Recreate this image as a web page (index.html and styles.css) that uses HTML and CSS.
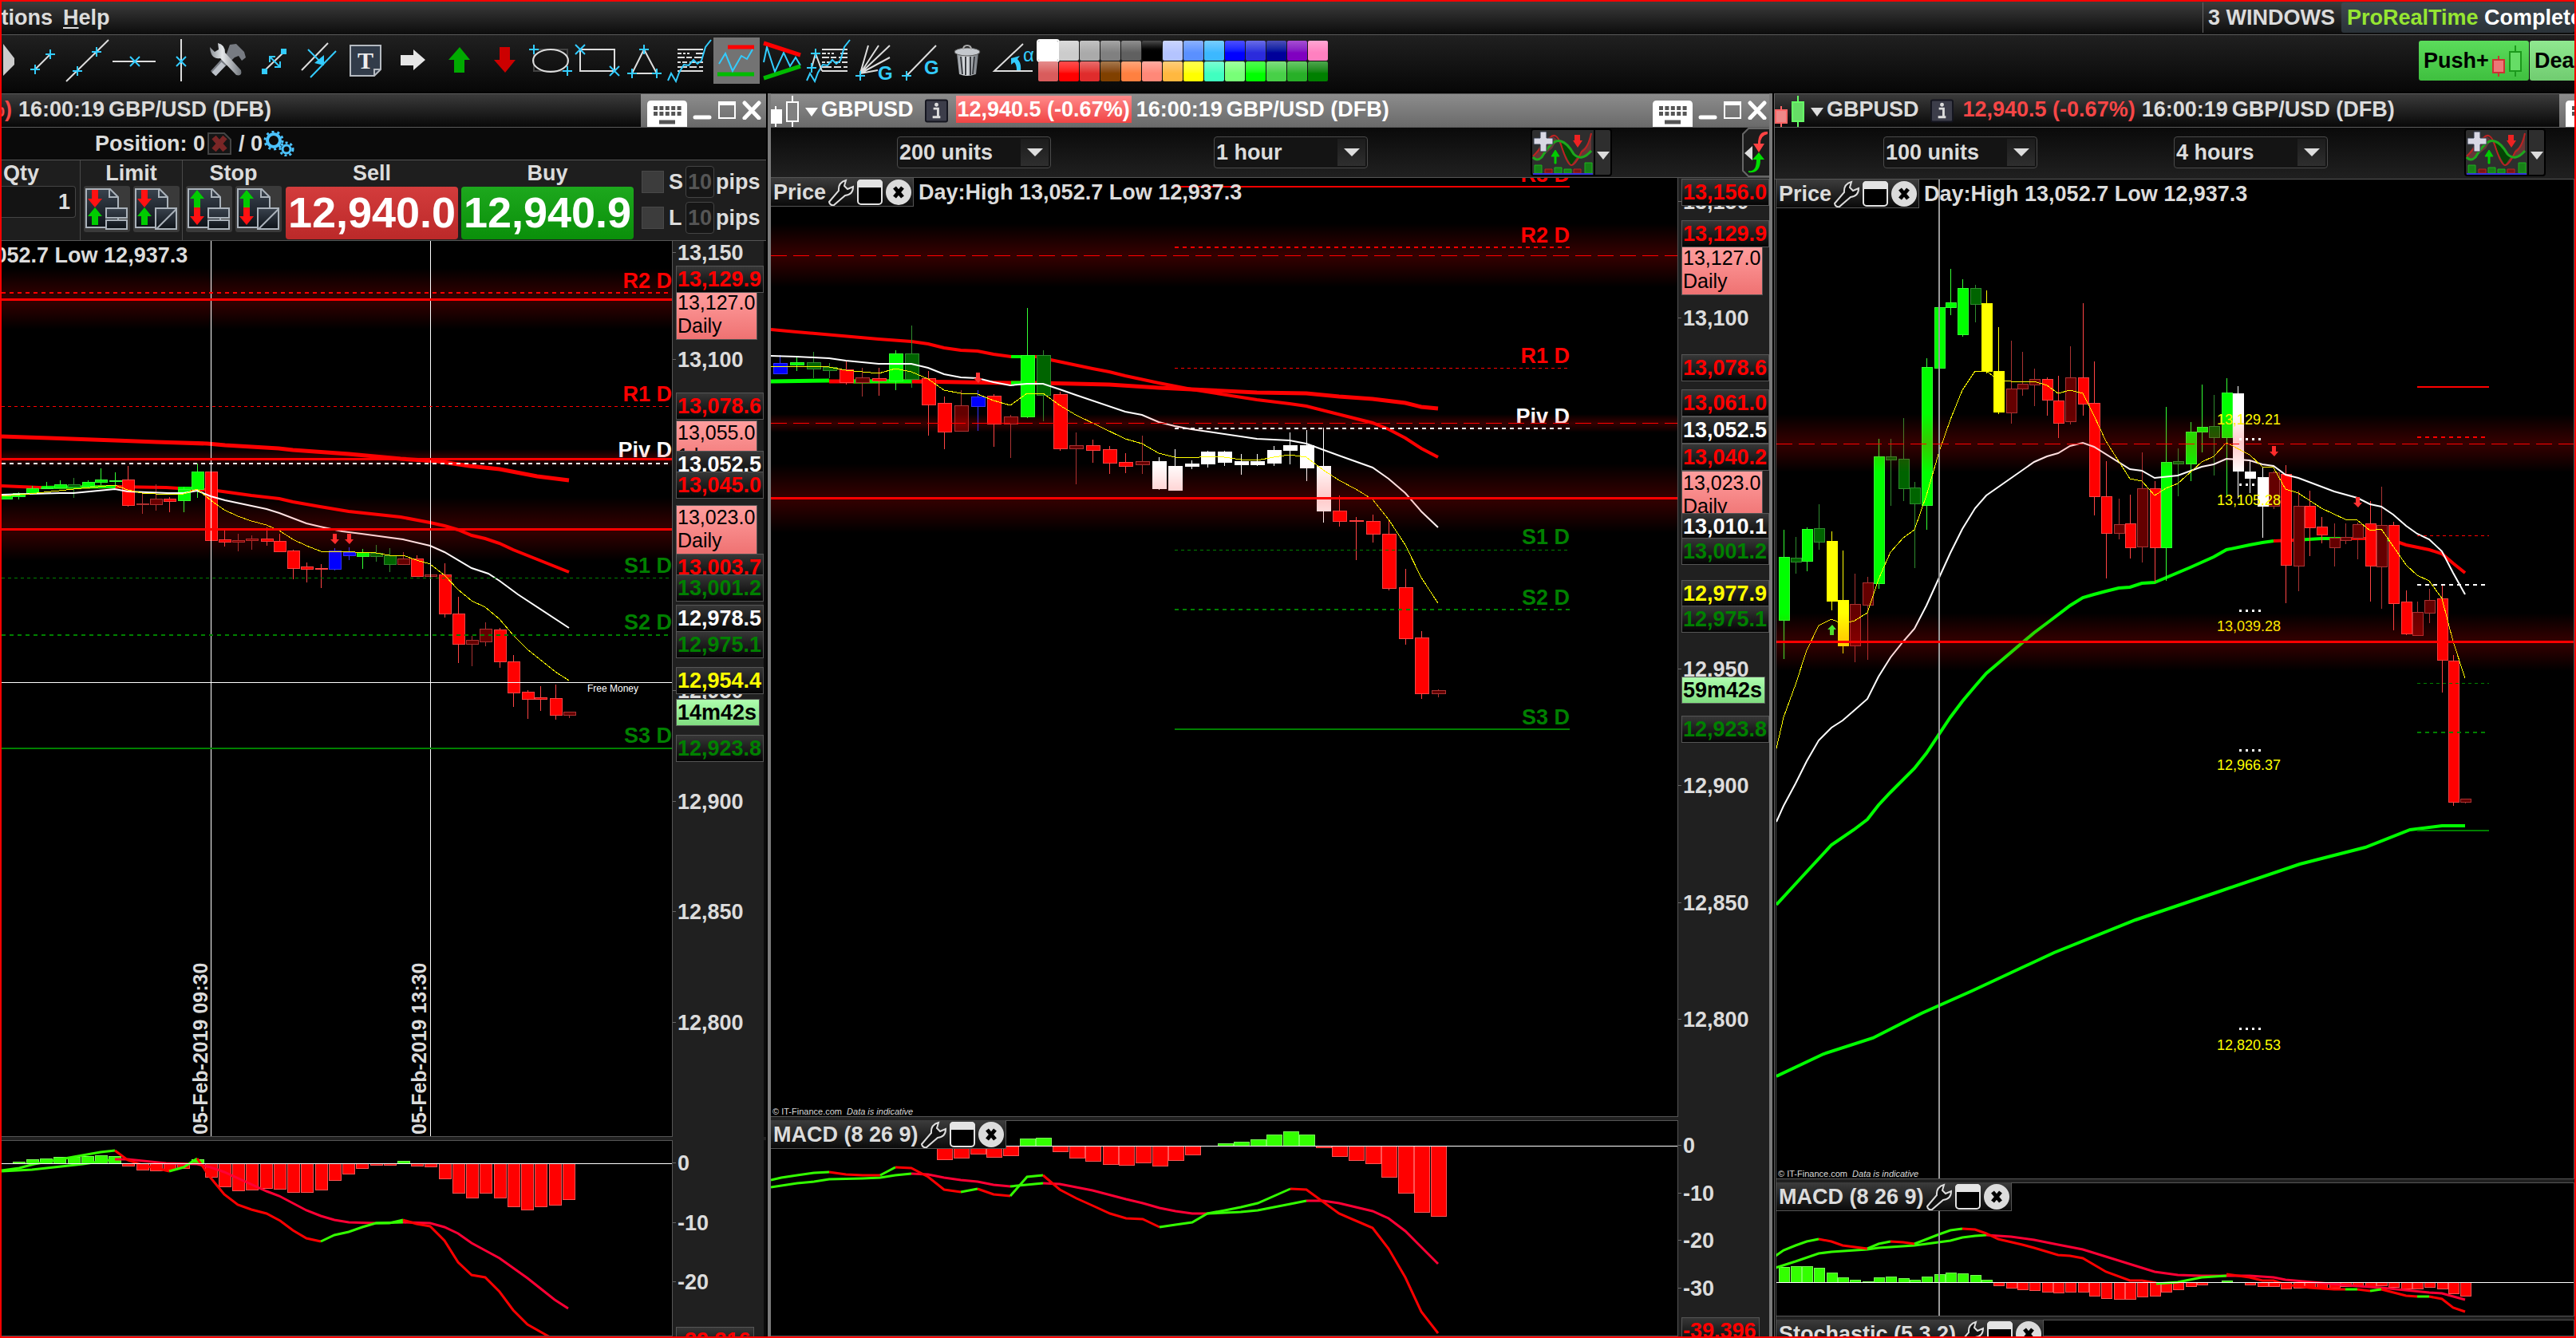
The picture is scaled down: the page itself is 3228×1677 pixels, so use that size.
FILE: index.html
```html
<!DOCTYPE html>
<html lang="en">
<head>
<meta charset="utf-8">
<title>ProRealTime Complete</title>
<link rel="stylesheet" href="styles.css">
</head>
<body>
<svg class="sprite" width="0" height="0" aria-hidden="true">
  <defs>
    <linearGradient id="band" x1="0" y1="0" x2="0" y2="1">
      <stop offset="0" stop-color="#f00" stop-opacity="0"/>
      <stop offset=".35" stop-color="#f00" stop-opacity=".15"/>
      <stop offset=".5" stop-color="#f00" stop-opacity=".21"/>
      <stop offset=".65" stop-color="#f00" stop-opacity=".15"/>
      <stop offset="1" stop-color="#f00" stop-opacity="0"/>
    </linearGradient>
    <linearGradient id="tag-dark" x1="0" y1="0" x2="0" y2="1"><stop offset="0" stop-color="#383838"/><stop offset="1" stop-color="#040404"/></linearGradient>
    <linearGradient id="tag-pink" x1="0" y1="0" x2="0" y2="1"><stop offset="0" stop-color="#ff9f9f"/><stop offset="1" stop-color="#ef7272"/></linearGradient>
    <linearGradient id="tag-green" x1="0" y1="0" x2="0" y2="1"><stop offset="0" stop-color="#b0ffb0"/><stop offset="1" stop-color="#80dc80"/></linearGradient>
    <linearGradient id="steel" x1="0" y1="0" x2="1" y2="0"><stop offset="0" stop-color="#8b9096"/><stop offset=".4" stop-color="#e4e7ea"/><stop offset="1" stop-color="#70757b"/></linearGradient>
    <linearGradient id="slate" x1="0" y1="0" x2="0" y2="1"><stop offset="0" stop-color="#39424d"/><stop offset="1" stop-color="#0d1218"/></linearGradient>
    <symbol id="i-keyboard" viewBox="0 0 50 33">
      <path d="M5 0h40q5 0 5 5v28H0V5q0-5 5-5z" fill="#fff"/>
      <path d="M8 9.500h35M8 16.500h35" stroke="#555" stroke-width="5" stroke-dasharray="5 2.400"/>
      <path d="M15 27h20" stroke="#555" stroke-width="5"/>
    </symbol>
    <symbol id="i-min" viewBox="0 0 24 24"><path d="M3 21h18" stroke="#fff" stroke-width="5" stroke-linecap="round"/></symbol>
    <symbol id="i-max" viewBox="0 0 24 24"><path d="M2 2h20v20H2z" fill="none" stroke="#fff" stroke-width="2"/><path d="M2 4h20" stroke="#fff" stroke-width="4"/></symbol>
    <symbol id="i-close" viewBox="0 0 24 24"><path d="M3 3l18 19M21 3L3 22" stroke="#fff" stroke-width="5" stroke-linecap="round"/></symbol>
    <symbol id="i-wrench" viewBox="0 0 34 34"><path d="M2 29L14 15Q13 5 23 2L21 9l4 4 7-3Q32 20 22 21L8 33Q3 34 2 29z" fill="#111" stroke="#ddd" stroke-width="2"/></symbol>
    <symbol id="i-panel" viewBox="0 0 34 34"><rect x="2" y="2" width="30" height="30" rx="4" fill="#000" stroke="#e4e4e4" stroke-width="2"/><path d="M1 11V6q0-5 5-5h22q5 0 5 5v5z" fill="#e4e4e4"/></symbol>
    <symbol id="i-round-x" viewBox="0 0 34 34"><circle cx="17" cy="17" r="16" fill="#dcdcdc"/><path d="M12 11l10 12M22 11L12 23" stroke="#000" stroke-width="5"/></symbol>
    <symbol id="i-info" viewBox="0 0 30 30"><rect x="1" y="1" width="28" height="28" rx="2" fill="#3c3d4a" stroke="#14151f" stroke-width="2"/><path d="M11 12h6v11M10 23h10" fill="none" stroke="#ddd" stroke-width="3"/><circle cx="15" cy="7" r="2.500" fill="#ddd"/></symbol>
    <symbol id="i-indicators" viewBox="0 0 102 60">
      <rect x="1" y="1" width="100" height="58" rx="3" fill="#2e2e2e" stroke="#000" stroke-width="2"/>
      <path d="M2 37L8 28Q26 -4 38 22Q46 46 51 46T64 27Q72 22 76 6V30L60 38Q50 36 42 22Q34 10 27 25L8 40z" fill="#7a3b3b" opacity=".75"/>
      <path d="M38 18Q46 18 58 36L51 46Q42 32 38 18z" fill="#054405"/>
      <path d="M3 35L24 12Q32 3 38 20Q46 46 51 46T64 29Q72 25 76 6" fill="none" stroke="#b22" stroke-width="2"/>
      <path d="M3 36Q8 42 14 36Q28 12 38 16Q46 18 54 32Q64 42 76 28" fill="none" stroke="#1da81d" stroke-width="3"/>
      <path d="M12 4h8v8h8v8h-8v9h-8v-9H4v-8h8z" fill="#d8d8e4" stroke="#303848" stroke-width="1"/>
      <path d="M30 44V35h-4l5-8 5 8h-4v9z" fill="#0c0" stroke="#0c0"/><path d="M55 8h7v7h3l-6 9-6-9h2z" fill="#e22"/>
      <path d="M5 46h9v10H5zM30 49h9v7h-9zM42 51h9v5h-9zM68 43h9v13h-9z" fill="#178017" stroke="#1db31d" stroke-width="1"/>
      <path d="M18 51h9v5h-9zM54 51h9v5h-9z" fill="#7a1515" stroke="#b22"/>
      <path d="M3 57h75" stroke="#33d" stroke-width="2"/><path d="M80 1v58" stroke="#000" stroke-width="2"/>
      <path d="M83 29h16l-8 10z" fill="#ddd"/>
    </symbol>
    <symbol id="i-candles" viewBox="0 0 38 40"><path d="M8 14v26M29 1v39" stroke="var(--wick1)" stroke-width="2"/><path d="M29 1v39" stroke="var(--wick2)" stroke-width="2"/><rect x="1" y="19" width="14" height="16" fill="var(--body1)" stroke="var(--wick1)" stroke-width="2"/><rect x="22" y="9" width="14" height="24" fill="var(--body2)" stroke="var(--wick2)" stroke-width="2"/></symbol>
    <symbol id="i-order-base" viewBox="0 0 58 58">
      <path d="M3 4h30l10 10v38H3z" fill="url(#slate)" stroke="#aab2ba" stroke-width="2"/><path d="M32 4v10h11" fill="none" stroke="#aab2ba" stroke-width="2"/>
    </symbol>
    <symbol id="i-two-box" viewBox="0 0 30 30"><path d="M2 2h26v12H2zM2 17h26v11H2z" fill="url(#slate)" stroke="#aab2ba" stroke-width="2"/></symbol>
    <symbol id="i-slash-box" viewBox="0 0 30 30"><path d="M2 2h26v26H2zM3 28L28 3" fill="url(#slate)" stroke="#aab2ba" stroke-width="2"/></symbol>
    <symbol id="i-up" viewBox="0 0 20 24"><path d="M6 23V12H1l9-11 9 11h-5v11z" fill="#0c0"/></symbol>
    <symbol id="i-down" viewBox="0 0 20 24"><path d="M6 1v11H1l9 11 9-11h-5V1z" fill="#f11"/></symbol>
  </defs>
</svg>

<nav class="menubar">
  <button class="menu menu-cut">Options</button>
  <button class="menu"><u>H</u>elp</button>
  <span class="win-count">3 WINDOWS</span>
  <span class="brand"><b>ProRealTime</b> Complete</span>
</nav>

<div class="toolbar">
  <div class="tools" id="tools"></div>
  <div class="palette" id="palette"></div>
  <div class="deal-actions">
    <button class="push">Push+<svg class="push-icon" width="38" height="40"><use href="#i-candles"/></svg></button>
    <button class="dealing">Dealing</button>
  </div>
</div>

<main class="windows">
  <section class="window win-left">
    <header class="titlebar">
      <span class="chg chg-cut">%)</span><span class="time">16:00:19</span><span>GBP/USD (DFB)</span>
      <div class="controls">
        <button aria-label="Keyboard"><svg width="50" height="33"><use href="#i-keyboard"/></svg></button>
        <button aria-label="Minimise"><svg width="24" height="24"><use href="#i-min"/></svg></button>
        <button aria-label="Maximise"><svg width="24" height="24"><use href="#i-max"/></svg></button>
        <button aria-label="Close"><svg width="24" height="24"><use href="#i-close"/></svg></button>
      </div>
    </header>
    <div class="position">
      <span>Position: 0</span>
      <svg width="32" height="30" viewBox="0 0 32 30"><path d="M2 2h20l8 8v18H2z" fill="#151515" stroke="#444" stroke-width="2"/><path d="M9 7l14 16M23 7L9 23" stroke="#7a2626" stroke-width="7"/></svg>
      <span class="pos-total">/ 0</span>
      <svg width="40" height="32" viewBox="0 0 40 32"><circle cx="14" cy="12" r="8" fill="none" stroke="#4cc3ff" stroke-width="4"/><circle cx="14" cy="12" r="11" fill="none" stroke="#4cc3ff" stroke-width="3" stroke-dasharray="3 4"/><circle cx="30" cy="23" r="5" fill="none" stroke="#4cc3ff" stroke-width="3"/><circle cx="30" cy="23" r="8" fill="none" stroke="#4cc3ff" stroke-width="3" stroke-dasharray="3 3"/></svg>
    </div>
    <div class="order">
      <div class="cell qty"><label for="qty">Qty</label><input id="qty" value="1"></div>
      <div class="cell pair"><span>Limit</span>
        <div class="pair-btns">
          <button aria-label="Limit price"><svg width="58" height="58"><use href="#i-order-base"/><use href="#i-down" x="4" y="4" width="20" height="24"/><use href="#i-up" x="4" y="26" width="20" height="24"/><use href="#i-two-box" x="26" y="26" width="30" height="30"/></svg></button>
          <button aria-label="Limit distance"><svg width="58" height="58"><use href="#i-order-base"/><use href="#i-down" x="4" y="4" width="20" height="24"/><use href="#i-up" x="4" y="26" width="20" height="24"/><use href="#i-slash-box" x="26" y="26" width="30" height="30"/></svg></button>
        </div></div>
      <div class="cell pair"><span>Stop</span>
        <div class="pair-btns">
          <button aria-label="Stop price"><svg width="58" height="58"><use href="#i-order-base"/><use href="#i-up" x="4" y="4" width="20" height="24"/><use href="#i-down" x="4" y="26" width="20" height="24"/><use href="#i-two-box" x="26" y="26" width="30" height="30"/></svg></button>
          <button aria-label="Stop distance"><svg width="58" height="58"><use href="#i-order-base"/><use href="#i-up" x="4" y="4" width="20" height="24"/><use href="#i-down" x="4" y="26" width="20" height="24"/><use href="#i-slash-box" x="26" y="26" width="30" height="30"/></svg></button>
        </div></div>
      <div class="cell price"><span>Sell</span><button class="sell">12,940.0</button></div>
      <div class="cell price"><span>Buy</span><button class="buy">12,940.9</button></div>
      <div class="cell protect">
        <div class="protect-row"><input type="checkbox" id="stop-on"><label for="stop-on">S</label><input class="pips" aria-label="Stop pips" value="10" disabled><span>pips</span></div>
        <div class="protect-row"><input type="checkbox" id="limit-on"><label for="limit-on">L</label><input class="pips" aria-label="Limit pips" value="10" disabled><span>pips</span></div>
      </div>
    </div>
    <div class="panes">
      <div class="pane left-price"><svg class="plot" data-chart="leftPrice"></svg><svg class="axis" data-axis="leftPrice"></svg>
        <div class="pane-head"><span class="day-range">Day:High 13,052.7 Low 12,937.3</span></div></div>
      <div class="pane left-macd"><svg class="plot" data-chart="leftMacd"></svg><svg class="axis" data-axis="leftMacd"></svg></div>
    </div>
  </section>

  <section class="window win-mid active">
    <header class="titlebar">
      <svg class="candle-icon" width="38" height="40"><use href="#i-candles"/></svg><i class="caret"></i>
      <span class="symbol">GBPUSD</span><svg class="info" width="29" height="30"><use href="#i-info"/></svg>
      <span class="chg">12,940.5 (-0.67%)</span><span class="time">16:00:19</span><span>GBP/USD (DFB)</span>
      <div class="controls">
        <button aria-label="Keyboard"><svg width="50" height="33"><use href="#i-keyboard"/></svg></button>
        <button aria-label="Minimise"><svg width="24" height="24"><use href="#i-min"/></svg></button>
        <button aria-label="Maximise"><svg width="24" height="24"><use href="#i-max"/></svg></button>
        <button aria-label="Close"><svg width="24" height="24"><use href="#i-close"/></svg></button>
      </div>
    </header>
    <div class="subbar">
      <div class="drop"><select aria-label="Units"><option>200 units</option></select></div>
      <div class="drop"><select aria-label="Timeframe"><option>1 hour</option></select></div>
      <button class="ind" aria-label="Add indicator"><svg width="102" height="60"><use href="#i-indicators"/></svg></button>
      <button class="tab" aria-label="Show orders"><svg width="34" height="62" viewBox="0 0 34 62"><path d="M34 1H8L1 8v46l7 7h26" fill="#1c1c1c" stroke="#666" stroke-width="2"/><path d="M32 5Q20 4 20 20h-6l7 11 7-11h-5Q23 10 32 8z" fill="#f44"/><path d="M8 54Q18 56 18 40h-5l8-9 7 9h-5Q23 58 8 56z" fill="#0d0"/><path d="M3 32l10-9v18z" fill="#ddd"/></svg></button>
    </div>
    <div class="panes">
      <div class="pane mid-price"><svg class="plot" data-chart="midPrice"></svg><svg class="axis" data-axis="midPrice"></svg>
        <div class="pane-head"><div class="pane-title"><span>Price</span><button aria-label="Settings"><svg width="34" height="34"><use href="#i-wrench"/></svg></button><button aria-label="Window"><svg width="34" height="34"><use href="#i-panel"/></svg></button><button aria-label="Remove"><svg width="34" height="34"><use href="#i-round-x"/></svg></button></div><span class="day-range">Day:High 13,052.7 Low 12,937.3</span></div>
        <p class="credit">© IT-Finance.com&nbsp; <i>Data is indicative</i></p></div>
      <div class="pane mid-macd"><svg class="plot" data-chart="midMacd"></svg><svg class="axis" data-axis="midMacd"></svg>
        <div class="pane-head"><div class="pane-title"><span>MACD (8 26 9)</span><button aria-label="Settings"><svg width="34" height="34"><use href="#i-wrench"/></svg></button><button aria-label="Window"><svg width="34" height="34"><use href="#i-panel"/></svg></button><button aria-label="Remove"><svg width="34" height="34"><use href="#i-round-x"/></svg></button></div></div></div>
    </div>
  </section>

  <section class="window win-right">
    <header class="titlebar">
      <svg class="candle-icon" width="38" height="40"><use href="#i-candles"/></svg><i class="caret"></i>
      <span class="symbol">GBPUSD</span><svg class="info" width="29" height="30"><use href="#i-info"/></svg>
      <span class="chg">12,940.5 (-0.67%)</span><span class="time">16:00:19</span><span>GBP/USD (DFB)</span>
      <div class="controls controls-cut">
        <button aria-label="Keyboard"><svg width="50" height="33"><use href="#i-keyboard"/></svg></button>
      </div>
    </header>
    <div class="subbar">
      <div class="drop"><select aria-label="Units"><option>100 units</option></select></div>
      <div class="drop"><select aria-label="Timeframe"><option>4 hours</option></select></div>
      <button class="ind" aria-label="Add indicator"><svg width="102" height="60"><use href="#i-indicators"/></svg></button>
    </div>
    <div class="panes">
      <div class="pane right-price"><svg class="plot" data-chart="rightPrice"></svg>
        <div class="pane-head"><div class="pane-title"><span>Price</span><button aria-label="Settings"><svg width="34" height="34"><use href="#i-wrench"/></svg></button><button aria-label="Window"><svg width="34" height="34"><use href="#i-panel"/></svg></button><button aria-label="Remove"><svg width="34" height="34"><use href="#i-round-x"/></svg></button></div><span class="day-range">Day:High 13,052.7 Low 12,937.3</span></div>
        <p class="credit">© IT-Finance.com&nbsp; <i>Data is indicative</i></p></div>
      <div class="pane right-macd"><svg class="plot" data-chart="rightMacd"></svg>
        <div class="pane-head"><div class="pane-title"><span>MACD (8 26 9)</span><button aria-label="Settings"><svg width="34" height="34"><use href="#i-wrench"/></svg></button><button aria-label="Window"><svg width="34" height="34"><use href="#i-panel"/></svg></button><button aria-label="Remove"><svg width="34" height="34"><use href="#i-round-x"/></svg></button></div></div></div>
      <div class="pane right-stoch"><svg class="plot"></svg>
        <div class="pane-head"><div class="pane-title"><span>Stochastic (5 3 2)</span><button aria-label="Settings"><svg width="34" height="34"><use href="#i-wrench"/></svg></button><button aria-label="Window"><svg width="34" height="34"><use href="#i-panel"/></svg></button><button aria-label="Remove"><svg width="34" height="34"><use href="#i-round-x"/></svg></button></div></div></div>
    </div>
  </section>
</main>
<script src="charts.js"></script>
</body>
</html>
```
FILE: styles.css
```css
* { box-sizing: border-box; }

body {
  margin: 0;
  height: 100vh;
  display: flex;
  flex-direction: column;
  overflow: hidden;
  border: 2px solid #f00;
  background: #000;
  color: #dcdcdc;
  font: bold 27px/32px "Liberation Sans", Arial, sans-serif;
  white-space: nowrap;
}

button, input, select { font: inherit; color: inherit; margin: 0; padding: 0; border: 0; background: none; }
svg { display: block; flex: none; }
.sprite { position: absolute; }

/* menu bar */
.menubar {
  display: flex;
  align-items: center;
  height: 42px;
  flex: none;
  padding-bottom: 2px;
  overflow: hidden;
  background: linear-gradient(#3c3c3c, #0c0c0c);
  border-bottom: 1px solid #5a5a5a;
}
.menu { margin-right: 13px; }
.menu-cut { margin-left: -38px; }
.menu u { text-decoration-thickness: 2px; text-underline-offset: 3px; }
.win-count { margin-left: auto; padding: 3px 8px 3px 6px; border-left: 1px solid #666; }
.brand {
  flex: none;
  width: 292px;
  height: 38px;
  padding: 3px 7px;
  overflow: hidden;
  color: #fff;
  background: linear-gradient(#3f484f, #2a3238);
  border-radius: 3px;
}
.brand b { color: #96e632; }

/* drawing toolbar */
.toolbar {
  display: flex;
  align-items: flex-start;
  height: 73px;
  flex: none;
  overflow: hidden;
  background: linear-gradient(#202020, #070707);
  border-bottom: 2px solid #000;
}
.tools { display: flex; margin: 3px 0 0 -36px; }
.tools button { width: 58px; height: 58px; }
.tools button.on { background: #737373; }
.palette {
  display: grid;
  grid-template-columns: repeat(14, 25px);
  grid-auto-rows: 25px;
  gap: 1px;
  margin: 7px 0 0 1px;
}
.palette button { border-radius: 2px; }
.palette button.on { outline: 2px solid #fff; }
.deal-actions { display: flex; gap: 1px; margin: 7px 0 0 auto; color: #000; }
.push {
  display: flex;
  align-items: center;
  width: 138px;
  height: 50px;
  padding: 0 6px;
  border-radius: 3px;
  background: linear-gradient(#5bdc5b, #3fbf3f);
}
.push-icon { --wick1: #c33; --body1: #e77; --wick2: #1c991c; --body2: #6d6; margin-left: 4px; }
.dealing { width: 56px; height: 50px; padding-left: 6px; overflow: hidden; text-align: left; background: linear-gradient(#90e890, #70cc70); border-radius: 3px 0 0 3px; }

/* windows */
.windows { display: grid; grid-template-columns: 959fr 1261fr 1004fr; flex: 1; min-height: 0; }
.window { display: flex; flex-direction: column; min-width: 0; min-height: 0; overflow: hidden; }
.win-mid { margin: 0 1px; border: solid #7a7a7a; border-width: 0 4px; }
.win-right { margin-left: 1px; border-left: 1px solid #666; }

.titlebar {
  display: flex;
  align-items: center;
  height: 43px;
  flex: none;
  overflow: hidden;
  background: linear-gradient(#3b3b3b, #080808);
  border: solid #5a5a5a;
  border-width: 1px 0;
}
.titlebar > span { margin-bottom: 3px; }
.active .titlebar { color: #fff; background: linear-gradient(#8c8c8c, #6a6a6a); margin: 0 -4px; padding-left: 2px; }
.caret { margin: 3px 4px 0 7px; border: 8px solid transparent; border-top: 11px solid #ddd; border-bottom: 0; }
.active .caret { border-top-color: #fff; }
.info { margin: 0 10px 0 14px; }
.symbol { flex: none; }
.chg { color: #f64646; padding: 0 2px; }
.active .chg { color: #fff; background: linear-gradient(#ff8a8a, #f04444); padding: 1px 2px; }
.chg-cut { margin-left: -22px; }
.time { margin: 0 5px 0 6px; }
.candle-icon { --wick1: #f66; --body1: #e88; --wick2: #6f6; --body2: #6d6; }
.active .candle-icon { --wick1: #fff; --body1: #fff; --wick2: #fff; --body2: #808080; }
.controls { display: flex; gap: 7px; align-items: center; height: 41px; margin-left: auto; padding: 0 6px 2px 8px; background: linear-gradient(#8c8c8c, #6a6a6a); }
.win-mid .controls { padding-right: 7px; background: none; }
.controls button:first-child { align-self: flex-end; margin-bottom: -2px; }
.controls-cut { width: 19px; flex: none; overflow: hidden; padding-right: 0; }
.win-left { border-right: 1px solid #000; }

/* order ticket */
.position { display: flex; align-items: center; gap: 2px; height: 41px; flex: none; padding-left: 117px; background: #0a0a0a; border-bottom: 1px solid #555; }
.pos-total { margin: 0 -2px 0 6px; }
.order { display: flex; height: 101px; flex: none; padding: 0 3px 0 0; background: #1e1e1e; border-bottom: 1px solid #555; }
.cell { display: flex; flex-direction: column; align-items: center; }
.qty { align-items: flex-start; width: 98px; }
.qty label { padding-left: 2px; }
.qty input { width: 93px; height: 40px; padding-right: 6px; text-align: right; background: #141414; border: 1px solid #444; border-left: 0; border-radius: 0 4px 4px 0; }
.pair { width: 128px; border-left: 1px solid #484848; }
.pair-btns { display: flex; gap: 4px; }
.pair-btns button { background: #3a3a3a; border-radius: 3px; }
.price { width: 220px; }
.price button { width: 216px; height: 66px; margin-top: 1px; padding-bottom: 2px; color: #fff; font-size: 54px; line-height: 64px; border-radius: 4px; }
.sell { background: linear-gradient(#d33c3c, #bb2929); }
.buy { background: linear-gradient(#1da81d, #0a8f0a); }
.protect { gap: 5px; flex: 1; padding: 7px 0 0 8px; align-items: flex-start; }
.protect-row { display: flex; align-items: center; height: 40px; }
.protect-row input[type="checkbox"] { appearance: none; width: 28px; height: 28px; background: #3c3c3c; border: 1px solid #484848; }
.protect-row label { width: 20px; margin: 0 1px 0 6px; }
.pips { width: 36px; height: 40px; text-align: center; color: #555; background: #161616; border: 1px solid #444; border-radius: 4px; }
.protect-row span { margin-left: 2px; }

/* unit and timeframe bar */
.subbar { display: flex; align-items: center; height: 63px; flex: none; padding-left: 158px; background: linear-gradient(#0a0a0a, #202020); border-bottom: 1px solid #555; }
.win-right .subbar { height: 65px; padding: 0 0 2px 136px; }
.drop { position: relative; width: 193px; height: 40px; margin-right: 204px; background: #141414; border: 1px solid #4a4a4a; border-radius: 4px; }
.win-right .drop { margin-right: 171px; }
.drop select { appearance: none; width: 100%; height: 100%; padding-left: 2px; }
.drop::after { content: ""; position: absolute; right: 9px; top: 14px; border: 10px solid transparent; border-top: 10px solid #ddd; border-bottom: 0; }
.drop::before { content: ""; position: absolute; right: 2px; top: 2px; width: 35px; height: 34px; background: linear-gradient(#1c1c1c, #2e2e2e); pointer-events: none; }
.tab { margin-left: auto; }

/* chart panes */
.panes { display: flex; flex-direction: column; gap: 4px; flex: 1; min-height: 0; background: #202020; }
.pane { position: relative; display: flex; flex-basis: 0; min-height: 0; overflow: hidden; }
.plot { flex: 1; min-width: 0; height: 100%; background: #000; border: solid #555; border-width: 0 1px 1px 0; }
.axis { width: 114px; height: 100%; }
.win-left .axis { width: 117px; border-right: 3px solid #0a0a0a; }
.pane + .pane .plot { border-top: 1px solid #555; }
.left-price { flex-grow: 1123; }
.left-macd { flex-grow: 246; }
.mid-price { flex-grow: 1177; }
.mid-macd { flex-grow: 271; }
.right-price { flex-grow: 1253; }
.right-macd { flex-grow: 168; }
.right-stoch { flex-grow: 21; }
.win-right .panes { border-left: 1px solid #555; margin-left: 1px; }
.pane-head { position: absolute; left: 0; top: 0; display: flex; align-items: flex-start; }
.pane-title { display: flex; align-items: center; gap: 2px; height: 36px; padding: 0 1px 0 3px; background: linear-gradient(#3c3c3c, #0a0a0a); border: solid #555; border-width: 0 1px 1px 0; }
.day-range { margin: 2px 0 0 6px; }
.win-left .day-range { margin-left: -172px; }
.credit { position: absolute; left: 2px; bottom: 0; margin: 0; font: 11px/14px "Liberation Sans", Arial, sans-serif; }

/* chart text */
.plot text, .axis text { font: bold 27px "Liberation Sans", Arial, sans-serif; }
.axis .line-tag { font-size: 25px; font-weight: normal; }
.plot .small { font: 12px "Liberation Sans", Arial, sans-serif; }
.plot .level { font: 18px "Liberation Sans", Arial, sans-serif; }
.plot .date { font-size: 25px; }
.crisp { shape-rendering: crispEdges; }
```
FILE: charts.js
```js
// Each chart maps its own plot units to pixels: px = unit * scale + offset.
const RED = '#f00', GREEN = '#008000', LIME = '#0f0', ROSE = '#ff0035', MACD_UP = '#3f0';

const CANDLE = {
  g: ['#0f0', '#3f3'], G: ['#006400', '#2e8b2e'], r: ['#f00', '#ff4444'], R: ['#640000', '#a33'],
  b: ['#00f', '#33f'], w: ['#fff', '#fff'], y: ['#ff0', '#ff0']
};

const charts = {
  leftPrice: {
    x: [.61224, -2], y: [.40816, 18], half: 12,
    thick: [
      [RED, 5, '4,556 100,561 235,568 320,574 425,578 460,583 570,594 600,599 713,610 820,624 895,632 960,648 1023,657 1100,679 1164,692'],
      [RED, 4, '4,708 80,712 235,710 340,714 445,722 515,738 572,748 600,758 655,772 685,778 713,786 820,803 881,820 910,830 938,844 966,859 993,869 1023,884 1051,903 1108,938 1164,973'],
      [LIME, 4, '85,713 235,710'], [LIME, 4, '365,716 404,716']
    ],
    candles: '11,736,748,738,747,g 38,728,750,730,739,g 66,707,736,715,731,g 94,697,718,712,714,g 122,692,716,703,713,g 151,684,746,703,711,G 179,692,714,696,708,g 206,654,706,688,696,g 235,666,712,690,692,g 262,647,772,688,766,r 291,725,794,762,764,R 319,702,784,748,764,R 347,742,789,748,754,r 375,711,789,718,752,g 404,640,746,664,717,g 432,664,876,664,875,r 459,846,894,873,879,r 487,855,910,875,879,R 515,860,904,870,874,R 545,835,891,870,876,r 572,855,909,876,908,r 600,905,995,907,960,r 628,943,1004,956,964,r 657,947,1022,961,964,r 685,898,967,907,964,b 713,896,936,911,920,b 741,902,963,912,923,g 770,889,941,914,923,G 797,899,973,922,947,G 825,911,948,932,947,R 853,922,986,932,984,r 881,980,985,981,984,R 910,946,1112,981,1101,r 938,1049,1252,1101,1192,r 966,1168,1262,1181,1192,R 993,1127,1200,1147,1185,R 1023,1145,1267,1148,1248,r 1051,1227,1387,1248,1342,r 1079,1335,1423,1341,1361,r 1106,1323,1399,1357,1361,r 1136,1318,1426,1360,1411,r 1164,1401,1421,1402,1411,R',
    thin: [
      ['#fff', 2, '4,736 60,732 122,730 150,729 235,719 262,725 345,731 375,730 404,723 432,739 460,752 545,780 572,792 628,822 655,834 700,848 740,854 800,868 825,873 881,892 910,912 966,960 1000,978 1023,1000 1060,1042 1164,1145'],
      ['#ff0', 1, '4,740 60,733 150,717 235,705 262,720 290,730 347,736 375,733 404,719 432,752 459,781 487,802 515,816 545,829 572,845 600,873 628,893 657,908 685,908 770,913 797,922 825,922 853,935 881,947 910,982 938,1027 966,1061 993,1081 1023,1117 1051,1167 1079,1211 1136,1279 1164,1306']
    ],
    bands: [[134, 95], [841, 98], [624, 28]],
    // y, colour, width, dash, from, to
    rows: [[115, RED, 2, '5 5'], [134, RED, 3], [464, RED, 1, '4 4'], [624, RED, 3], [640, '#fff', 2, '5 5'], [841, RED, 3], [991, GREEN, 1, '4 4'], [1166, GREEN, 2, '5 5'], [1311, '#fff', 1], [1515, GREEN, 2]],
    cols: [[432, '#fff', 1], [881, '#fff', 1]],
    labels: [['R2 D', 1375, 100, RED], ['R1 D', 1375, 448, RED], ['Piv D', 1375, 621, '#fff'], ['S1 D', 1375, 974, GREEN], ['S2 D', 1375, 1149, GREEN], ['S3 D', 1375, 1498, GREEN], ['Free Money', 1306, 1340, '#fff', 'small']],
    dates: [['05-Feb-2019 09:30', 424], ['05-Feb-2019 13:30', 873]],
    arrows: [[685, 855, 'd'], [713, 855, 'd']],
    plain: [['13,150', -10], ['13,100', 318], ['12,950', 1336], ['12,900', 1676], ['12,850', 2014], ['12,800', 2354]],
    pink: [['13,127.0', 'Daily', 107], ['13,055.0', '1 hour', 506], ['13,023.0', 'Daily', 766]],
    tags: [['13,129.9', 33, RED], ['13,078.6', 422, RED], ['13,052.5', 600, '#fff'], ['13,045.0', 665, RED], ['13,003.7', 917, RED], ['13,001.2', 981, GREEN], ['12,978.5', 1074, '#fff'], ['12,975.1', 1155, GREEN], ['12,954.4', 1265, '#ff0'], ['12,923.8', 1473, GREEN]],
    timer: ['14m42s', 1361]
  },
  midPrice: {
    x: [.57398, -6], y: [.40816, 97], ay: [.4719, -3], half: 15,
    thick: [
      [RED, 4, '10,229 67,234 246,258 317,265 354,272 389,283 425,291 462,295 497,304 535,312 590,312 605,316 713,347 749,357 784,369 857,393 929,411 1072,444 1143,455 1179,463 1324,515 1359,535 1396,562 1431,592 1467,620'],
      [LIME, 4, '535,312 575,312'],
      [LIME, 5, '10,387 138,385'],
      [RED, 5, '138,386 317,386 533,391 600,392 749,398 857,407 929,412 1072,421 1179,425 1251,433 1324,441 1396,454 1431,465 1467,471'],
      [LIME, 5, '190,386 317,386'], [LIME, 5, '535,391 570,391']
    ],
    candles: '30,307,365,331,362,b 67,311,355,328,336,g 103,296,378,328,347,G 138,331,378,343,352,G 174,326,397,350,389,r 209,345,434,375,389,R 246,345,430,377,384,r 283,292,414,301,384,g 317,216,407,301,379,G 354,355,554,377,458,r 389,434,595,454,541,r 425,414,541,461,539,R 462,414,538,434,464,b 497,426,588,431,518,r 533,490,622,495,518,R 570,162,500,307,494,g 605,292,510,306,428,G 641,419,600,427,592,r 676,545,703,584,592,R 713,566,638,584,597,r 749,586,671,596,636,r 784,608,669,635,646,r 821,554,671,632,641,R 857,620,720,632,715,w 892,595,720,647,720,w 929,630,656,639,648,w 964,600,652,603,639,w 1000,600,647,603,634,w 1037,610,674,632,641,w 1072,610,647,632,641,w 1108,586,647,598,636,w 1143,545,643,583,599,w 1179,537,693,583,652,w 1216,528,821,647,783,w 1251,737,833,784,815,r 1288,803,936,813,816,r 1324,796,882,816,856,r 1359,817,1030,855,1021,r 1396,963,1196,1020,1175,r 1431,1154,1362,1174,1346,r 1467,1334,1357,1336,1344,R',
    thin: [
      ['#fff', 2, '10,308 67,310 103,314 138,317 174,324 246,334 283,332 317,334 354,346 389,364 425,374 462,378 497,390 533,400 570,394 605,395 641,412 676,428 784,479 821,491 857,513 892,525 929,534 1072,564 1143,569 1179,577 1251,615 1324,652 1359,687 1396,731 1431,787 1467,836'],
      ['#ff0', 1, '10,343 67,340 103,340 138,343 174,354 246,363 283,349 317,357 354,379 389,414 425,425 462,427 497,446 533,460 570,425 605,425 641,461 676,489 784,564 821,579 857,608 892,619 929,623 964,618 1000,620 1037,626 1072,629 1108,621 1143,613 1179,621 1216,658 1251,692 1288,719 1324,750 1359,810 1396,890 1431,990 1467,1069']
    ],
    bands: [[-1, 98], [515, 28], [746, 106]],
    rows: [[-211, RED, 2, '', 892, 1754], [-24, RED, 2, '5 5', 892, 1754], [-1, RED, 1, '20 8'], [346, RED, 1, '4 4', 892, 1754], [515, RED, 1, '20 8'], [531, '#fff', 2, '5 5', 892, 1754], [746, RED, 3], [903, GREEN, 1, '4 4', 892, 1754], [1087, GREEN, 2, '5 5', 892, 1754], [1455, GREEN, 2, '', 892, 1754]],
    labels: [['R3 D', 1754, -225, RED], ['R2 D', 1754, -39, RED], ['R1 D', 1754, 331, RED], ['Piv D', 1754, 516, '#fff'], ['S1 D', 1754, 887, GREEN], ['S2 D', 1754, 1073, GREEN], ['S3 D', 1754, 1441, GREEN]],
    arrows: [[462, 360, 'd']],
    plain: [['13,150', 68], ['13,100', 377], ['12,950', 1309], ['12,900', 1619], ['12,850', 1930], ['12,800', 2240]],
    pink: [['13,127.0', 'Daily', 186], ['13,023.0', 'Daily', 785]],
    tags: [['13,156.0', 9, RED], ['13,129.9', 119, RED], ['13,078.6', 475, RED], ['13,061.0', 568, RED], ['13,052.5', 640, '#fff'], ['13,040.2', 712, RED], ['13,010.1', 897, '#fff'], ['13,001.2', 963, GREEN], ['12,977.9', 1075, '#ff0'], ['12,975.1', 1143, GREEN], ['12,923.8', 1435, GREEN]],
    timer: ['59m42s', 1331]
  },
  rightPrice: {
    x: [.64286, -6], y: [.45918, 95], half: 10,
    thick: [
      [LIME, 4, '10,2240 101,2181 197,2137 293,2069 390,2007 550,1903 710,1814 870,1738 1030,1661 1158,1617 1245,1568 1306,1558 1352,1558'],
      [LIME, 4, '10,1773 60,1695 116,1610 160,1568 186,1540 209,1500 232,1465 279,1401 302,1360 349,1262 372,1217 396,1175 419,1141 512,1030 536,1003 582,957 606,935 628,925 652,917 676,909 699,905 722,896 746,892 816,851 862,823 886,804 932,790 956,785 979,779'],
      [RED, 4, '979,779 1020,778'], [LIME, 4, '1020,778 1072,774 1130,773'], [RED, 4, '1130,773 1166,773'], [LIME, 4, '1166,774 1210,777'],
      [RED, 4, '1210,777 1236,791 1282,804 1306,815 1329,841 1352,866']
    ],
    candles: '23,749,1102,823,996,g 46,769,869,825,837,G 69,743,862,748,835,g 92,679,804,745,781,G 116,754,969,780,942,y 139,806,1087,941,1066,y 162,869,1111,952,1066,R 186,878,1104,893,953,R 209,501,910,549,896,g 232,501,684,549,557,G 256,444,670,556,637,G 279,618,854,634,678,G 302,281,750,305,681,g 326,135,378,142,306,g 349,37,163,129,141,g 372,65,222,90,215,g 396,81,183,90,132,G 419,96,322,131,316,y 442,196,433,316,427,y 466,233,460,364,428,R 489,264,384,351,363,R 512,309,412,338,352,R 536,333,437,338,395,r 559,329,499,397,457,r 582,248,462,334,454,R 606,131,437,334,404,r 628,289,710,403,657,r 652,562,882,657,757,r 676,665,775,733,757,R 699,653,828,732,797,r 722,538,838,636,794,R 746,616,893,636,797,r 769,414,888,564,798,g 792,526,658,562,569,G 816,455,616,481,568,g 839,353,538,468,482,g 862,381,602,466,496,G 886,335,657,375,496,g 909,357,664,377,589,w 932,562,648,590,607,w 956,580,772,605,683,w 979,588,692,593,684,R 1002,573,950,597,846,r 1026,642,917,684,848,R 1049,642,822,684,742,r 1072,715,786,741,763,r 1096,732,849,771,797,R 1119,731,788,769,777,R 1142,729,829,733,771,R 1166,670,945,732,848,r 1189,632,965,737,850,R 1212,727,1024,736,949,r 1236,915,1036,945,1033,r 1259,945,1036,974,1036,R 1282,910,1004,940,975,R 1306,900,1193,937,1105,r 1329,1091,1502,1106,1491,r 1352,1483,1497,1484,1491,R',
    thin: [
      ['#fff', 2, '10,1546 23,1502 46,1442 69,1380 92,1325 116,1290 139,1270 162,1242 186,1210 209,1150 232,1098 256,1055 279,1020 302,957 349,812 372,747 396,690 419,656 512,565 536,549 559,541 582,521 606,511 628,522 699,584 722,588 746,608 792,600 839,578 862,571 886,555 932,560 956,571 979,574 1002,599 1026,607 1096,645 1142,662 1166,680 1189,685 1212,708 1236,738 1259,760 1282,775 1306,807 1329,867 1352,925'],
      ['#ff0', 1, '10,1345 23,1262 46,1172 69,1078 92,1011 116,994 139,1006 162,998 186,975 209,885 232,810 256,770 279,750 302,655 326,535 349,448 372,367 396,315 419,315 442,340 466,345 512,345 536,355 559,377 582,369 606,376 628,438 652,507 699,610 722,617 746,656 769,637 792,622 839,563 862,548 886,512 932,545 956,577 979,580 1002,638 1026,649 1072,691 1119,721 1142,724 1166,752 1189,748 1236,846 1259,873 1282,889 1306,937 1329,1055 1352,1155']
    ],
    bands: [[513, 80], [1055, 80]],
    rows: [[359, RED, 2, '', 1258, 1398], [496, RED, 2, '5 5', 1258, 1398], [765, RED, 1, '4 4', 1258, 1398], [900, '#fff', 2, '5 5', 1258, 1398], [1168, GREEN, 1, '4 4', 1258, 1398], [1302, GREEN, 2, '5 5', 1258, 1398], [1570, GREEN, 2, '', 1258, 1398], [513, RED, 1, '20 8'], [1055, RED, 3],
      [500, '#fff', 3, '3 5', 911, 955], [626, '#fff', 3, '3 5', 911, 955], [970, '#fff', 3, '3 5', 911, 955], [1350, '#fff', 3, '3 5', 911, 955], [2110, '#fff', 3, '3 5', 911, 955]],
    cols: [[325, '#999', 2]],
    labels: [['13,129.21', 992, 462, '#ff0', 'level'], ['13,105.28', 992, 682, '#ff0', 'level'], ['13,039.28', 992, 1026, '#ff0', 'level'], ['12,966.37', 992, 1405, '#ff0', 'level'], ['12,820.53', 992, 2168, '#ff0', 'level']],
    arrows: [[979, 520, 'd'], [1142, 660, 'd'], [116, 1008, 'u']]
  },
  leftMacd: {
    x: [.61224, -2], y: [.33333, -248], half: 12, base: 829,
    bars: '37,822 65,813 93,810 121,804 150,804 178,801 206,798 234,801 261,836 291,851 318,854 346,852 374,845 403,813 431,878 459,914 487,929 515,926 544,920 572,923 599,935 627,935 657,926 684,890 712,866 740,845 769,833 797,833 825,819 853,836 880,839 910,884 937,938 965,956 993,938 1023,956 1050,989 1078,1001 1106,989 1135,983 1163,962',
    thin: [
      [MACD_UP, 3, '4,858 65,851 170,830 235,812'],
      [ROSE, 3, '235,812 262,813 340,827 404,830 432,843 459,860 545,932 572,951 628,1006 657,1026 685,1042 713,1051 769,1054'],
      [MACD_UP, 3, '769,1054 825,1050'],
      [ROSE, 3, '825,1050 881,1054 910,1069 938,1093 966,1127 1023,1184 1079,1261 1135,1340 1163,1375'],
      [MACD_UP, 3, '4,856 40,845 70,832 150,804 206,786 235,781'],
      [RED, 3, '235,781 262,815 290,835 347,857'],
      [MACD_UP, 3, '347,857 375,844 404,811'],
      [RED, 3, '404,811 430,880 459,944 487,983 515,1003 545,1018 573,1044 600,1081 628,1109 657,1123'],
      [MACD_UP, 3, '657,1123 685,1099 713,1087 741,1069 769,1054 797,1054 825,1042'],
      [RED, 3, '825,1042 853,1057 881,1065 910,1120 938,1200 966,1249 993,1257 1023,1310 1051,1380 1079,1433 1128,1485']
    ],
    rows: [[829, '#fff', 1]],
    plain: [['0', 829], ['-10', 1053], ['-20', 1275]],
    tags: [['-39.316', 1446, RED, 97]]
  },
  midMacd: {
    x: [.80357, -6], y: [.33333, -44], half: 12, base: 226,
    bars: '278,275 304,269 330,254 355,266 381,261 407,199 432,195 458,245 484,269 509,281 536,293 561,296 587,287 613,299 638,278 664,257 715,216 741,210 766,201 792,183 817,171 843,183 869,230 894,263 920,278 946,290 971,341 997,401 1022,473 1048,488',
    thin: [
      [MACD_UP, 3, '7,382 48,367 75,361 98,352 150,347 178,346 202,337 227,331'],
      [ROSE, 3, '227,331 253,334 278,346 304,355 330,361 355,373 381,379'],
      [MACD_UP, 3, '381,379 432,367'],
      [ROSE, 3, '432,367 458,370 509,394 561,427 587,442 613,460 638,472 664,481 688,481'],
      [MACD_UP, 3, '688,481 741,475 766,469 817,445 843,433'],
      [ROSE, 3, '843,433 869,433 894,442 946,472 971,499 997,545 1022,605 1048,670'],
      [MACD_UP, 3, '7,355 24,346 48,335 75,328 98,325'],
      [RED, 3, '98,325 124,334 150,335 178,337'],
      [MACD_UP, 3, '178,337 202,307'],
      [RED, 3, '202,307 227,310 253,343 278,391 304,398'],
      [MACD_UP, 3, '304,398 330,388'],
      [RED, 3, '330,388 355,409 381,414'],
      [MACD_UP, 3, '381,414 407,343 432,337'],
      [RED, 3, '432,337 458,391 484,422 509,449 536,479 561,497 587,502 613,532'],
      [MACD_UP, 3, '613,532 638,523 664,512 688,481 715,468 741,457 766,442 817,388'],
      [RED, 3, '817,388 843,391 894,481 920,506 946,535 971,613 997,720 1022,850 1048,930']
    ],
    rows: [[226, '#fff', 1]],
    plain: [['0', 226], ['-10', 405], ['-20', 583], ['-30', 762]],
    tags: [['-39.396', 874, RED, 97]]
  },
  rightMacd: {
    x: [.64286, -6], y: [.33333, -41], half: 10, base: 496,
    bars: '23,438 46,435 69,435 92,441 116,459 139,477 162,486 186,492 209,477 232,474 256,480 279,486 302,474 326,465 349,459 372,462 396,468 419,486 442,507 466,516 489,522 512,525 536,531 559,534 582,531 606,531 628,546 652,555 676,558 699,558 722,549 746,546 769,531 792,522 816,510 839,504 886,489 932,504 956,510 979,510 1002,519 1026,516 1049,516 1072,517 1096,516 1119,510 1142,510 1166,513 1189,507 1212,513 1236,519 1259,519 1282,513 1306,519 1329,537 1352,546',
    thin: [
      [MACD_UP, 3, '8,440 46,418 92,388 116,380 186,373 209,367 279,358 302,352 349,338 372,328 396,322 419,319'],
      [ROSE, 3, '419,319 466,323 512,337 559,355 606,373 652,399 722,441 746,455 792,469 839,472 880,472 932,472 979,478 1002,485 1072,499 1142,511 1189,517 1282,534 1306,538 1352,562'],
      [MACD_UP, 3, '8,395 23,376 46,358 69,343 92,334'],
      [RED, 3, '92,334 116,343 139,358 186,370'],
      [MACD_UP, 3, '186,370 209,352 232,343'],
      [RED, 3, '232,343 256,344 279,350'],
      [MACD_UP, 3, '279,350 326,314 349,301 372,295'],
      [RED, 3, '372,295 396,296 419,311 442,332 489,355 512,365 559,394 582,397 606,406 652,455 699,490 722,490 750,498'],
      [MACD_UP, 3, '750,502 792,494 839,478 886,470'],
      [RED, 3, '886,466 932,478 956,490 979,490 1002,504 1049,516 1096,523 1119,523'],
      [MACD_UP, 3, '1119,523 1142,523'],
      [RED, 3, '1142,523 1166,529'],
      [MACD_UP, 3, '1166,529 1189,522'],
      [RED, 3, '1189,522 1236,547 1259,550'],
      [MACD_UP, 3, '1259,550 1282,550'],
      [RED, 3, '1282,550 1306,558 1329,590 1352,607']
    ],
    rows: [[496, '#fff', 1]],
    cols: [[325, '#999', 2]]
  }
};

const map = ([scale, offset]) => v => Math.round(v * scale + offset);

function drawPlot(c) {
  const X = map(c.x), Y = map(c.y);
  const poly = ([color, w, pts]) => {
    const p = pts.split(' ').map(s => { const [a, b] = s.split(','); return X(a) + ',' + Y(b); }).join(' ');
    return `<polyline${w === 1 ? ' class="crisp"' : ''} points="${p}" fill="none" stroke="${color}" stroke-width="${w}"/>`;
  };
  let s = '';
  const w = Math.round(c.half * 2 * c.x[0]);
  (c.thick || []).forEach(l => s += poly(l));
  s += '<g class="crisp">';
  if (c.bars) c.bars.split(' ').forEach(b => {
    const [x, v] = b.split(',').map(Number), up = v < c.base;
    const top = Y(Math.min(v, c.base)), h = Math.max(1, Math.abs(Y(v) - Y(c.base)));
    s += `<rect x="${X(x) - (w >> 1)}" y="${top}" width="${w}" height="${h}" fill="${up ? MACD_UP : RED}" stroke="${up ? '#7f5' : '#f55'}"/>`;
  });
  if (c.candles) c.candles.split(' ').forEach(k => {
    const [x, hi, lo, top, bot, kind] = k.split(','), [fill, edge] = CANDLE[kind];
    s += `<rect x="${X(x)}" y="${Y(hi)}" width="1" height="${Y(lo) - Y(hi)}" fill="${edge}"/>`;
    s += `<rect x="${X(x) - (w >> 1)}" y="${Y(top)}" width="${w}" height="${Math.max(1, Y(bot) - Y(top))}" fill="${fill}" stroke="${edge}"/>`;
  });
  s += '</g>';
  (c.thin || []).forEach(l => s += poly(l));
  (c.arrows || []).forEach(([x, y, d]) => s += d === 'd'
    ? `<path d="M${X(x) - 2} ${Y(y)}h5v7h3l-5 6-6-6h3z" fill="#f33"/>`
    : `<path d="M${X(x) - 2} ${Y(y) + 13}h5v-7h3l-5-6-6 6h3z" fill="#3f3"/>`);
  (c.labels || []).forEach(([t, x, y, color, cls]) => s += `<text class="${cls || ''}" x="${X(x)}" y="${Y(y)}" fill="${color}" text-anchor="end">${t}</text>`);
  (c.bands || []).forEach(([y, r]) => s += `<rect x="0" y="${Y(y - r)}" width="100%" height="${Y(y + r) - Y(y - r)}" fill="url(#band)"/>`);
  (c.cols || []).forEach(([x, color, wd]) => s += `<rect x="${X(x)}" y="0" width="${wd}" height="100%" fill="${color}"/>`);
  (c.rows || []).forEach(([y, color, wd, dash, a, b]) => {
    const x1 = a === undefined ? 0 : X(a), x2 = b === undefined ? '100%' : X(b);
    s += `<line class="crisp" x1="${x1}" x2="${x2}" y1="${Y(y)}" y2="${Y(y)}" stroke="${color}" stroke-width="${wd}" stroke-dasharray="${dash || 'none'}"/>`;
  });
  (c.dates || []).forEach(([t, x]) => s += `<text class="date" fill="#dcdcdc" transform="translate(${X(x)} 1120) rotate(-90)">${t}</text>`);
  return s;
}

function drawAxis(c) {
  const Y = map(c.ay || c.y);
  let s = '';
  const box = (y, w, h, fill) => `<rect class="crisp" x="4" y="${y}" width="${w}" height="${h}" fill="url(#${fill})" stroke="#555"/>`;
  (c.plain || []).forEach(([t, y]) => s += `<rect y="${Y(y)}" width="4" height="1" fill="#666"/><text x="6" y="${Y(y) + 10}" fill="#dcdcdc">${t}</text>`);
  (c.pink || []).forEach(([a, b, y]) => s += box(Y(y), 101, 61, 'tag-pink') + `<text class="line-tag" x="6" y="${Y(y) + 24}">${a}</text><text class="line-tag" x="6" y="${Y(y) + 53}">${b}</text>`);
  (c.tags || []).forEach(([t, y, color, w]) => s += box(Y(y), w || 109, 33, 'tag-dark') + `<text x="6" y="${Y(y) + 26}" fill="${color}">${t}</text>`);
  if (c.timer) s += box(Y(c.timer[1]), 104, 33, 'tag-green') + `<text x="6" y="${Y(c.timer[1]) + 26}">${c.timer[0]}</text>`;
  return s;
}

document.querySelectorAll('[data-chart]').forEach(el => { el.innerHTML = drawPlot(charts[el.dataset.chart]); });
document.querySelectorAll('[data-axis]').forEach(el => { el.innerHTML = drawAxis(charts[el.dataset.axis]); });

// Drawing tools
const line = (d, color = '#ddd', w = 2) => `<path d="${d}" fill="none" stroke="${color}" stroke-width="${w}"/>`;
const CY = '#3cf';
const plus = (x, y) => line(`M${x - 6} ${y}h12M${x} ${y - 6}v12`, CY);
const cross = (x, y) => line(`M${x - 6} ${y - 6}l12 12M${x + 6} ${y - 6}l-12 12`, CY);
const retrace = x => line(`M${x} 15h32M${x} 20h5m2 0h3m2 0h3m8 0h9M${x} 25h9m2 0h7m3 0h11M${x} 31h4m2 0h6m3 0h8m2 0h7M${x} 37h12m3 0h9m3 0h5M${x} 42h32`);
const squiggle = line('M1 54L5 45 11 55 15 44 21 34 27 35 33 28 38 33 43 29 48 12 55 3', CY);
const tools = [
  ['Pointer', '<path d="M38 8l14 18v8L38 48z" fill="#ccc"/>'],
  ['Segment', line('M20 40L39 21') + plus(20, 40) + plus(39, 21)],
  ['Line', line('M1 55L54 3') + plus(15, 42) + plus(39, 18)],
  ['Horizontal line', line('M1 30h54') + cross(29, 30)],
  ['Vertical line', line('M29 2v53') + cross(29, 30)],
  ['Settings', '<path d="M32 9l8-1 10 10 2 7-5 4-4-6-5 2L14 48l-6-6 20-22z" fill="#777b82"/><path d="M7 12l6 6 5-3-1-8Q26 9 26 19L46 41q2 8-6 6L20 26Q8 28 7 12z" fill="url(#steel)"/><path d="M12 46l12-13" stroke="#bcc1c8" stroke-width="7"/>'],
  ['Extend', line('M17 42L42 18') + '<path d="M14 39h7v7h-7zM38 14h7v7h-7z" fill="#3cf"/>' + line('M24 24l13 13M24 31v-7h7M37 30v7h-7', CY)],
  ['Parallel', line('M6 41L39 7') + line('M17 50L49 17M14 15l19 19', CY) + '<path d="M22 32l12-10v13z" fill="#3cf"/>'],
  ['Text', '<path d="M9 10h38v30l-8 8H9z" fill="#323c4a" stroke="#b5bac0" stroke-width="2"/><path d="M47 40h-8v8" fill="none" stroke="#b5bac0" stroke-width="2"/><text x="28" y="39" fill="#eee" text-anchor="middle" font-family="Liberation Serif" font-size="30">T</text>'],
  ['Arrow right', '<path d="M14 22h16v-7l15 13-15 13v-6H14z" fill="#e6e6e6"/>'],
  ['Arrow up', '<path d="M23 44V28h-7l14-16 13 16h-7v16z" fill="#0a0"/>'],
  ['Arrow down', '<path d="M22 12v16h-7l14 16 13-16h-7V12z" fill="#c00"/>'],
  ['Ellipse', line('M7 15h42v27H7z', '#444') + '<ellipse cx="28" cy="29" rx="22" ry="14" fill="none" stroke="#ddd" stroke-width="2"/>' + plus(7, 15) + plus(49, 42)],
  ['Rectangle', line('M7 15h43v27H7z') + cross(7, 15) + cross(50, 42)],
  ['Triangle', line('M29 15L14 45h31z') + plus(29, 15) + plus(14, 45) + plus(45, 45)],
  ['Retracement', retrace(13) + squiggle],
  ['Channel', line('M18 12h33', '#f00', 5) + line('M5 46h46', '#0b0', 5) + line('M7 33L15 20 24 42 35 23 42 27 49 15', CY)],
  ['Triangle pattern', line('M5 31L9 12 19 43 30 19 38 36 45 25 51 35', CY) + line('M5 7l46 15', '#f00', 5) + line('M5 51l46-15', '#0b0', 5)],
  ['Projection', retrace(20) + squiggle + line('M7 38L12 20 20 42') + plus(12, 20) + plus(7, 38)],
  ['Gann fan', line('M10 45L20 10M10 45L33 10M10 45L47 10M10 45L47 25M10 45L32 41') + plus(10, 48) + '<text x="32" y="53" fill="#3cf" font-size="24">G</text>'],
  ['Gann line', line('M10 48L47 10') + plus(10, 48) + '<text x="32" y="46" fill="#3cf" font-size="24">G</text>'],
  ['Delete', '<path d="M15 20h27l-3 26q-11 4-21 0z" fill="url(#steel)"/><path d="M20 24l2 22M26 24v23M32 24v23M37 24l-2 22" stroke="#3a3d42" stroke-width="2"/><ellipse cx="28" cy="18" rx="16" ry="5" fill="#c4c8cd" stroke="#555"/><path d="M23 15q0-5 5-5t5 5" fill="none" stroke="#aaa" stroke-width="2"/>'],
  ['Angle', line('M40 8L4 42h48') + '<path d="M25 26l11-3-3 4q5 5 4 14h-5q0-7-3-10l-4 3z" fill="#3cf"/><text x="40" y="30" fill="#3cf" font-size="24" font-weight="normal">α</text>']
];
document.getElementById('tools').innerHTML = tools.map(([name, art]) =>
  `<button aria-label="${name}"${name === 'Channel' ? ' class="on"' : ''}><svg width="58" height="58">${art}</svg></button>`).join('');

const colors = ['#fff', '#ccc', '#aaa', '#808080', '#606060', '#000', '#b4c4ff', '#5a90ff', '#3cb8ff', '#00f', '#2b2bdc', '#00009a', '#8000c0', '#ff80c0',
  '#d95c5c', '#f00', '#e02c2c', '#804000', '#ff8040', '#ff8878', '#ffb840', '#ff0', '#40ffc0', '#78ff78', '#0f0', '#48d048', '#28b028', '#008000'];
document.getElementById('palette').innerHTML = colors.map((c, i) =>
  `<button aria-label="Colour ${c}"${i ? '' : ' class="on"'} style="background:linear-gradient(color-mix(in srgb, ${c} 70%, white), ${c} 60%)"></button>`).join('');
```
